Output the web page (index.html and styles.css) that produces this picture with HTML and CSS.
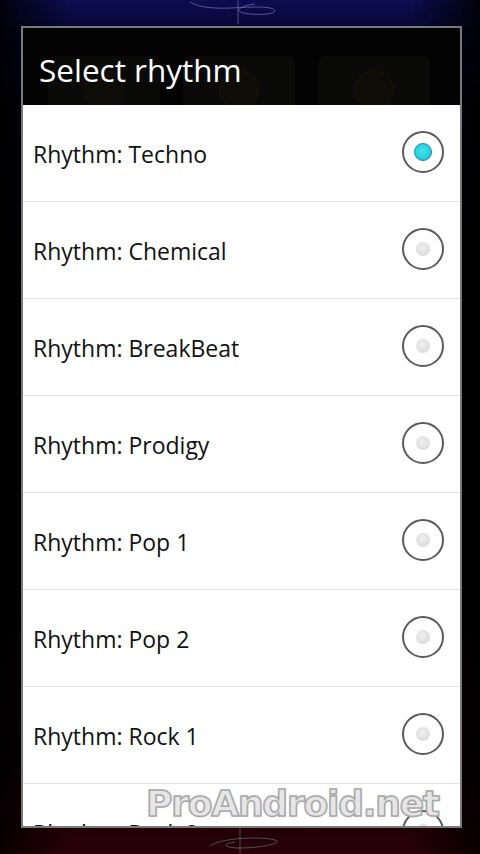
FILE: index.html
```html
<!DOCTYPE html>
<html>
<head>
    <title>Select rhythm</title>
    <link rel="stylesheet" href="styles.css">
</head>
<body>
    <div class="screen">
        <svg class="swirl swirl-top" width="120" height="30" viewBox="0 0 120 30">
            <path d="M10 2 C30 14, 70 4, 90 8 C100 10, 95 16, 70 14 C50 12, 60 6, 75 4" fill="none" stroke="#8a86b8" stroke-width="1" opacity="0.6"/>
            <path d="M58 0 L58 24" stroke="#9a96c8" stroke-width="1" opacity="0.5"/>
        </svg>

        <div class="dialog">
            <div class="dialog-title">
                <div class="ghost-buttons">
                    <span class="ghost"><i></i></span>
                    <span class="ghost"><i></i></span>
                    <span class="ghost"><i></i></span>
                </div>
                <h2>Select rhythm</h2>
            </div>
            <ul class="choice-list">
                <li class="choice checked"><span>Rhythm: Techno</span><span class="radio"></span></li>
                <li class="choice"><span>Rhythm: Chemical</span><span class="radio"></span></li>
                <li class="choice"><span>Rhythm: BreakBeat</span><span class="radio"></span></li>
                <li class="choice"><span>Rhythm: Prodigy</span><span class="radio"></span></li>
                <li class="choice"><span>Rhythm: Pop 1</span><span class="radio"></span></li>
                <li class="choice"><span>Rhythm: Pop 2</span><span class="radio"></span></li>
                <li class="choice"><span>Rhythm: Rock 1</span><span class="radio"></span></li>
                <li class="choice"><span>Rhythm: Rock 2</span><span class="radio"></span></li>
            </ul>
            <div class="watermark">ProAndroid.net</div>
        </div>

        <svg class="swirl swirl-bottom" width="120" height="26" viewBox="0 0 120 26">
            <path d="M30 18 C40 10, 80 8, 95 12 C105 15, 80 20, 60 20 C45 20, 40 16, 55 14" fill="none" stroke="#6fa0a8" stroke-width="1" opacity="0.5"/>
            <path d="M60 0 L60 26" stroke="#7fb8c0" stroke-width="1" opacity="0.4"/>
        </svg>
    </div>
</body>
</html>
```

FILE: styles.css
```css
* {
    box-sizing: border-box;
}

body {
    margin: 0;
    width: 480px;
    height: 854px;
    overflow: hidden;
    font-family: "Open Sans", "DejaVu Sans", sans-serif;
    background: #000;
}

.screen {
    position: relative;
    width: 480px;
    height: 854px;
    padding: 26px 18px 0 21px;
    background:
        linear-gradient(to right, rgba(0,0,0,0.85) 0, rgba(0,0,0,0) 70px, rgba(0,0,0,0) 410px, rgba(0,0,0,0.85) 480px),
        linear-gradient(to bottom, #0c0c52 0, #05052a 40px, #01010e 110px, #000 300px, #000 560px, #0c0003 760px, #2a0008 854px);
}

.swirl {
    position: absolute;
    left: 180px;
}

.swirl-top {
    top: 0;
}

.swirl-bottom {
    bottom: 0;
}

.dialog {
    position: relative;
    width: 441px;
    height: 802px;
    border: 2px solid #7a7a7a;
    background: #fff;
    display: flex;
    flex-direction: column;
    overflow: hidden;
}

.dialog-title {
    position: relative;
    height: 77px;
    background: #030303;
    display: flex;
    align-items: center;
    padding: 6px 16px 0;
    flex-shrink: 0;
    overflow: hidden;
}

.dialog-title h2 {
    position: relative;
    margin: 0;
    font-weight: normal;
    font-size: 31.5px;
    color: #fff;
}

.ghost-buttons {
    position: absolute;
    left: 25px;
    top: 28px;
    display: flex;
    gap: 23px;
}

.ghost {
    width: 112px;
    height: 60px;
    border-radius: 8px;
    background: #0a0a09;
    display: flex;
    justify-content: center;
    padding-top: 14px;
}

.ghost i {
    width: 40px;
    height: 40px;
    border-radius: 50%;
    background: #0e0c07;
    border: 2px solid #121008;
}

.choice-list {
    list-style: none;
    margin: 0;
    padding: 0;
}

.choice {
    height: 97px;
    border-bottom: 1px solid #e2e2e2;
    display: flex;
    align-items: center;
    justify-content: space-between;
    padding: 1px 16px 0 10px;
    font-size: 23px;
    color: #111;
}

.radio {
    width: 42px;
    height: 42px;
    margin-top: -4px;
    border-radius: 50%;
    border: 2px solid #5a5a5a;
    background: #fff;
    display: flex;
    align-items: center;
    justify-content: center;
}

.radio::after {
    content: "";
    width: 14px;
    height: 14px;
    border-radius: 50%;
    background: radial-gradient(circle at 45% 40%, #f0f0f0 0, #dcdcdc 70%, #cfcfcf 100%);
}

.checked .radio::after {
    width: 16px;
    height: 16px;
    background: radial-gradient(circle at 45% 40%, #3fe4ee 0, #24cfdc 65%, #189aa8 100%);
    border: 1px solid #168a96;
}

.watermark {
    position: absolute;
    left: 123px;
    bottom: 2px;
    font-family: "DejaVu Sans", sans-serif;
    font-weight: bold;
    font-size: 36px;
    letter-spacing: -1.2px;
    color: #e6e6e6;
    -webkit-text-stroke: 1.5px #a8a8a8;
    text-shadow: 0 0 2px rgba(0,0,0,0.35);
}
```
